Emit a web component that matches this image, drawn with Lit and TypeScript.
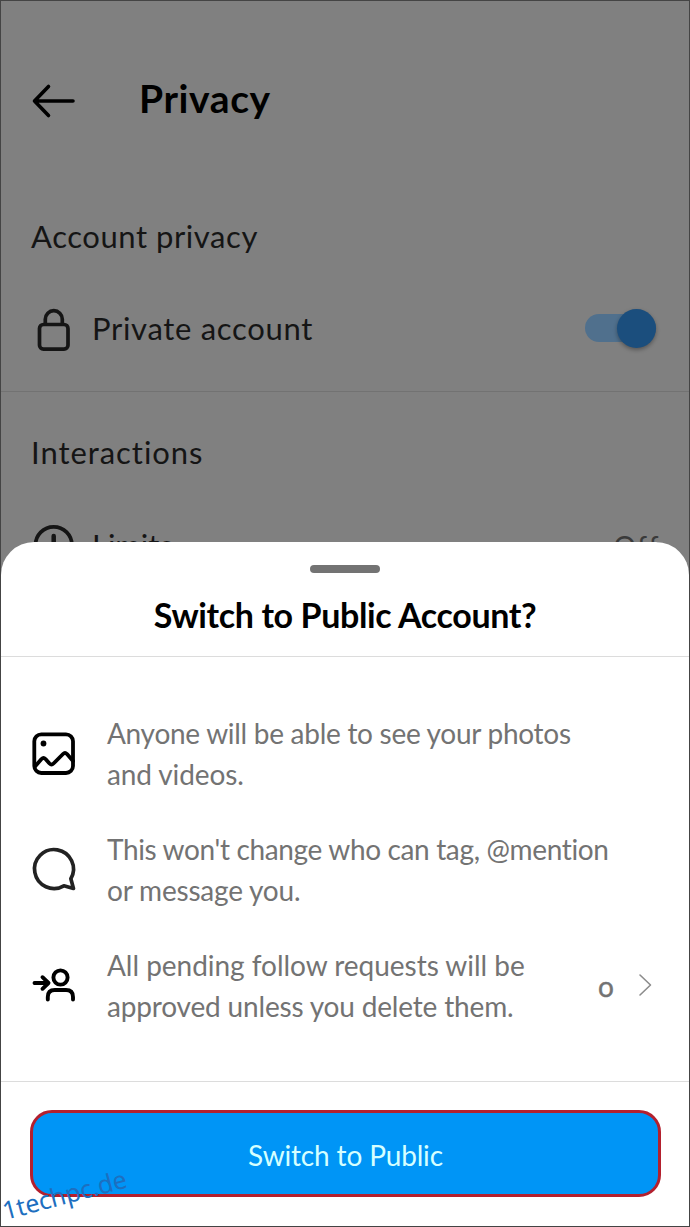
import { LitElement, html, css } from "lit";
import { customElement } from "lit/decorators.js";

@customElement("app-root")
export class AppRoot extends LitElement {
  static styles = css`
    :host { display: block; }
    * { box-sizing: border-box; }
    svg { display: block; fill: none; stroke: currentColor; stroke-linecap: round; stroke-linejoin: round; flex: none; overflow: visible; }
    .screen { position: relative; width: 690px; height: 1227px; border: 1px solid #444; background: #808080; overflow: hidden; font-family: Lato, "Open Sans", sans-serif; color: #151515; white-space: nowrap; }
    .bar { display: flex; align-items: center; gap: 63px; height: 90px; margin-top: 55px; padding-left: 31px; color: #000; }
    .bar h1 { margin: 0; padding-bottom: 6px; font-size: 39px; font-weight: 700; line-height: 48px; letter-spacing: 0.6px; }
    .heading { margin: 0; padding-left: 30px; font-size: 31px; font-weight: 400; line-height: 46px; }
    .first { margin-top: 67px; letter-spacing: 0.56px; }
    .second { padding-top: 37px; letter-spacing: 0.95px; }
    .setting { display: flex; align-items: center; height: 56px; padding: 0 33px 0 31px; font-size: 31px; gap: 17px; }
    .private { margin-top: 41px; letter-spacing: 0.68px; }
    .limits { margin-top: 42px; padding-right: 29px; }
    .grow { flex: 1; }
    .rule { height: 1px; background: #727272; margin-top: 35px; }
    .switch { display: flex; align-items: center; justify-content: flex-end; width: 71px; height: 28px; border-radius: 14px; background: #50708d; }
    .knob { width: 39px; height: 39px; border-radius: 50%; background: #1b4e7d; box-shadow: 0 2px 4px #0005; }
    .off { color: #3a3a3a; font-size: 28px; letter-spacing: 1.5px; padding-top: 2px; }
    .sheet { position: absolute; left: 0; right: 0; bottom: 0; height: 684px; border-radius: 33px 33px 0 0; background: #fff; display: flex; flex-direction: column; align-items: stretch; color: #000; }
    .grip { width: 70px; height: 8px; border-radius: 4px; background: #737373; margin: 23px auto 0; flex: none; }
    .title { margin: 18px 0 17px; height: 48px; line-height: 48px; font-size: 34px; font-weight: 700; letter-spacing: -0.37px; text-align: center; flex: none; }
    .line { height: 1px; background: #dcdcdc; flex: none; }
    .notes { display: flex; flex-direction: column; gap: 34px; padding: 56px 37px 0 31px; height: 424px; flex: none; }
    .note { display: flex; align-items: center; height: 82px; font-size: 28px; line-height: 41px; color: #737373; }
    .note svg { color: #000; margin-right: 31px; }
    .note .bubble { color: #222; margin-bottom: 2px; }
    .note .follow { margin-bottom: 2px; }
    .note .chevron { color: #8c8c8c; margin: 0 0 2px 24px; }
    .text span { display: block; }
    .l1 { letter-spacing: -0.28px; }
    .l2 { letter-spacing: -0.12px; }
    .l3 { letter-spacing: -0.35px; }
    .l4 { letter-spacing: -0.2px; }
    .l5 { letter-spacing: -0.03px; }
    .l6 { letter-spacing: -0.17px; }
    .count { -webkit-text-stroke: 0.4px currentColor; }
    .button { display: block; flex: none; width: 631px; height: 87px; margin: 28px 0 0 29px; border: 3px solid #b3202e; border-radius: 22px; background: #0095f6; color: #d5ffff; font: 400 28px/84px Lato, sans-serif; letter-spacing: -0.15px; padding: 0; text-align: center; }
    .mark { position: absolute; left: 5px; top: 1196px; font: 25px/26px "Noto Sans", "Open Sans", sans-serif; letter-spacing: -0.1px; color: #1d6fc0; transform: rotate(-15deg); transform-origin: 0 100%; }
  `;

  render() {
    return html`<div class="screen">
      <header class="bar">
        <svg width="44" height="44" viewBox="0 0 44 44" stroke-width="3.600"><path d="M41 22H2.500M16.500 7.500L2.500 22l14 14.500"/></svg>
        <h1>Privacy</h1>
      </header>
      <h2 class="heading first">Account privacy</h2>
      <div class="setting private">
        <svg width="43" height="44" viewBox="0 0 43 44" stroke-width="3.700"><rect x="7.500" y="18.500" width="28.500" height="24.700" rx="4"/><path d="M13.300 18V13.200a8.500 8.500 0 0 1 17 0V18"/></svg>
        <span class="grow">Private account</span>
        <span class="switch"><i class="knob"></i></span>
      </div>
      <div class="rule"></div>
      <h2 class="heading second">Interactions</h2>
      <div class="setting limits">
        <svg width="43" height="43" viewBox="0 0 43 43" stroke-width="3.700"><circle cx="21.700" cy="21" r="18.200"/><path d="M21.700 12v11" stroke-width="4.500"/></svg>
        <span class="grow">Limits</span>
        <span class="off">Off</span>
      </div>
      <section class="sheet">
        <div class="grip"></div>
        <h2 class="title">Switch to Public Account?</h2>
        <div class="line"></div>
        <div class="notes">
          <div class="note">
            <svg width="44" height="44" viewBox="0 0 44 44" stroke-width="3.800"><rect x="2.300" y="2.300" width="38.700" height="38.700" rx="7"/><circle cx="11.500" cy="11.500" r="2.900" fill="currentColor" stroke="none"/><path d="M3 34.500l6.500-7.500q2-2 4 0l4 4.500q2 2 4 0l9.500-9.500q2-2 4 0L41 29"/></svg>
            <div class="text"><span class="l1">Anyone will be able to see your photos</span><span class="l2">and videos.</span></div>
          </div>
          <div class="note">
            <svg class="bubble" width="44" height="44" viewBox="0.700 0.700 22.600 22.600" stroke-width="1.900"><path d="M20.656 17.008a9.993 9.993 0 1 0-3.590 3.615L22 22Z"/></svg>
            <div class="text"><span class="l3">This won't change who can tag, @mention</span><span class="l4">or message you.</span></div>
          </div>
          <div class="note">
            <svg class="follow" width="44" height="44" viewBox="0 0 44 44" stroke-width="3.900"><circle cx="28.500" cy="14.500" r="7.100"/><path d="M15.800 36.500V34q0-7 7-7H34q7 0 7 7v2.500M2.500 20h14M10.500 14.200l6 5.800-6 5.800"/></svg>
            <div class="text grow"><span class="l5">All pending follow requests will be</span><span class="l6">approved unless you delete them.</span></div>
            <span class="count">o</span>
            <svg class="chevron" width="14" height="22" viewBox="0 0 14 22" stroke-width="1.600"><path d="M2 1l10.500 10L2 21"/></svg>
          </div>
        </div>
        <div class="line"></div>
        <button class="button">Switch to Public</button>
      </section>
      <div class="mark">1techpc.de</div>
    </div>`;
  }
}
